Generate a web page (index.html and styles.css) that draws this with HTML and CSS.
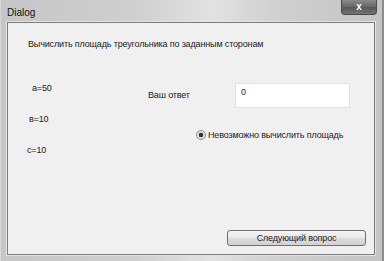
FILE: index.html
```html
<!DOCTYPE html>
<html lang="ru">
<head>
    <meta charset="UTF-8">
    <title>Dialog</title>
    <link rel="stylesheet" href="styles.css">
</head>
<body>

    <div class="window">
        <div class="titlebar">
            <span class="title">Dialog</span>
            <span class="close-btn">x</span>
        </div>

        <div class="client">
            <p class="task">Вычислить площадь треугольника по заданным сторонам</p>

            <div class="main">
                <div class="sides">
                    <span class="side side-a">а=50</span>
                    <span class="side side-b">в=10</span>
                    <span class="side side-c">с=10</span>
                </div>

                <div class="answer">
                    <div class="answer-row">
                        <span class="answer-label">Ваш ответ</span>
                        <div class="answer-box">0</div>
                    </div>
                    <div class="radio-row">
                        <span class="radio"></span>
                        <span>Невозможно вычислить площадь</span>
                    </div>
                </div>
            </div>

            <div class="footer">
                <button class="next-btn">Следующий вопрос</button>
            </div>
        </div>
    </div>

</body>
</html>
```

FILE: styles.css
```css
/* Window frame */
body {
    margin: 0;
    padding: 0;
    font-family: "Liberation Sans", Arial, sans-serif;
    font-size: 9px;
    letter-spacing: -0.15px;
    color: #222;
    background-color: #c8c8c8;
}

.window {
    width: 384px;
    height: 261px;
    display: flex;
    flex-direction: column;
    box-sizing: border-box;
    padding: 0 7px 6px 6px;
    background: linear-gradient(to right, #c6c6c6, #cfcfcf 35%, #e2e2e2 55%, #d0d0d0 72%, #c4c4c4);
    border-right: 2px solid #8c8c8c;
    border-left: 1px solid #d8d8d8;
}

/* Title bar */
.titlebar {
    height: 22px;
    display: flex;
    justify-content: space-between;
    align-items: flex-start;
}

.title {
    font-size: 10px;
    letter-spacing: 0;
    color: #111;
    margin-top: 7px;
}

.close-btn {
    width: 36px;
    height: 15px;
    margin-right: -2px;
    box-sizing: border-box;
    border: 1px solid #4a4a4a;
    border-top: none;
    border-radius: 0 0 4px 4px;
    background: linear-gradient(#8a8a8a, #666 50%, #575757 51%, #747474);
    color: #fff;
    font-weight: bold;
    font-size: 10px;
    line-height: 13px;
    text-align: center;
}

/* Client area */
.client {
    flex: 1;
    display: flex;
    flex-direction: column;
    background-color: #f0f0f0;
    border: 1px solid #7c7c7c;
    box-shadow: 0 0 0 1px #e4e4e4;
}

.task {
    margin: 15px 0 0 20px;
    line-height: 12px;
}

.main {
    display: flex;
    margin-top: 32px;
}

.sides {
    width: 140px;
    display: flex;
    flex-direction: column;
    gap: 19px;
    line-height: 12px;
}

.side-a { margin-left: 24px; }
.side-b { margin-left: 21px; }
.side-c { margin-left: 19px; }

.answer-row {
    display: flex;
    align-items: center;
    margin-top: 1px;
}

.answer-label {
    width: 87px;
    margin-top: -2px;
}

.answer-box {
    width: 115px;
    height: 25px;
    box-sizing: border-box;
    padding: 2px 5px;
    background-color: #fff;
    border: 1px solid #e2e2e2;
    line-height: 12px;
}

.radio-row {
    display: flex;
    align-items: center;
    gap: 2px;
    margin: 21px 0 0 48px;
    line-height: 12px;
}

.radio {
    width: 10px;
    height: 10px;
    box-sizing: border-box;
    border-radius: 50%;
    border: 1px solid #8a8a8a;
    background: radial-gradient(circle, #333 0 2px, #d8d8d8 2.5px, #f4f4f4 5px);
}

/* Bottom button */
.footer {
    margin-top: auto;
    display: flex;
    justify-content: flex-end;
    padding: 0 8px 8px 0;
}

.next-btn {
    width: 139px;
    height: 16px;
    padding: 0;
    font-family: "Liberation Sans", Arial, sans-serif;
    font-size: 9px;
    letter-spacing: -0.15px;
    color: #222;
    border: 1px solid #707070;
    border-radius: 3px;
    background: linear-gradient(#f4f4f4, #e8e8e8 50%, #dcdcdc 51%, #d2d2d2);
}
```
